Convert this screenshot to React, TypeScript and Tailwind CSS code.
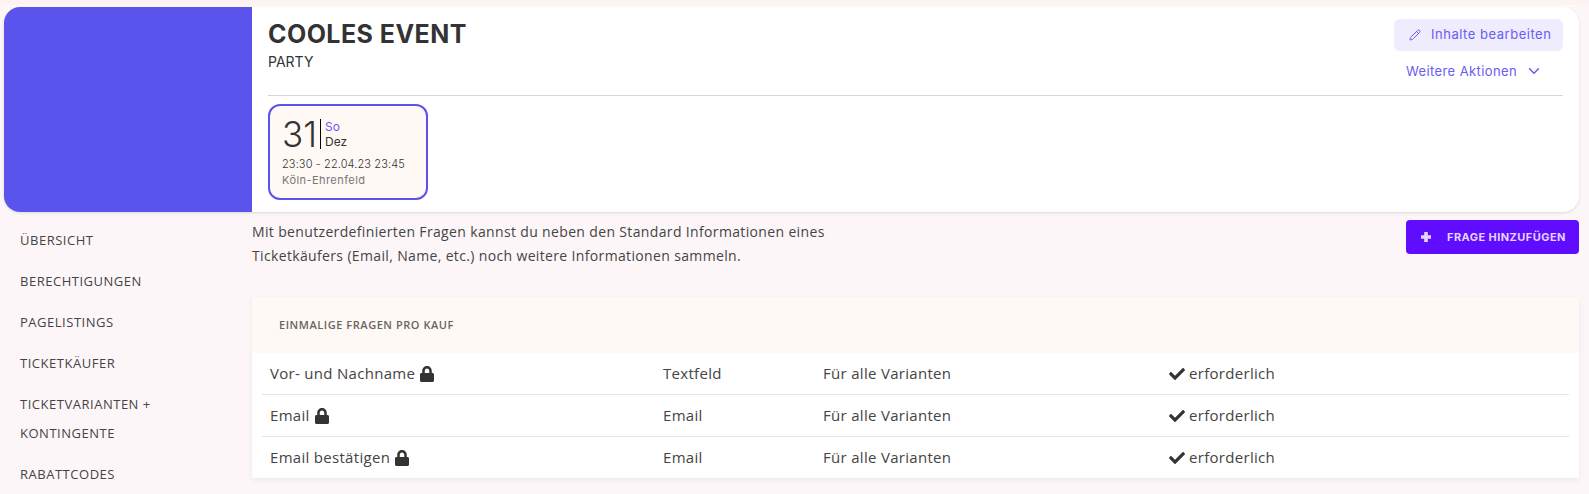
import { ChevronDown, Pencil } from "lucide-react";
import { FaCheck, FaLock } from "react-icons/fa";

const navItems = [
  "Übersicht",
  "Berechtigungen",
  "Pagelistings",
  "Ticketkäufer",
  "Ticketvarianten + Kontingente",
  "Rabattcodes",
];

const questions = [
  { name: "Vor- und Nachname", type: "Textfeld" },
  { name: "Email", type: "Email" },
  { name: "Email bestätigen", type: "Email" },
];

export default function App() {
  return (
    <div className="h-[494px] overflow-hidden border-t-[5px] border-[#fdf3f3] bg-[#fdf6f9] pl-1 pr-[10px] font-['Open_Sans',sans-serif] text-[#333333]">
      <div className="h-[2px] bg-[#fffafa]" />

      {/* Event header */}
      <header className="flex h-[205px] rounded-2xl bg-white shadow-[0_1px_3px_rgba(0,0,0,0.12)]">
        <div className="w-[248px] shrink-0 rounded-l-2xl bg-[#5a53ec]" />

        <div className="flex-1 px-4 pt-3">
          <div className="flex h-[77px] justify-between border-b border-[#d6d6d6]">
            <div>
              <h1 className="font-['Inter',sans-serif] text-[25px] leading-[31px] font-bold tracking-[0.45px]">
                COOLES EVENT
              </h1>
              <p className="mt-[3px] font-['Inter',sans-serif] text-sm leading-[18px]">PARTY</p>
            </div>

            <div className="flex flex-col items-end">
              <button className="flex h-8 w-[169px] items-center gap-[10px] rounded-md bg-[#eeecfd] pl-[15px] font-['Inter',sans-serif] text-[13px] tracking-[0.04em] text-[#6a5cf0]">
                <Pencil className="h-3 w-3" />
                Inhalte bearbeiten
              </button>
              <button className="mt-[11px] mr-[20px] flex items-center gap-[8px] font-['Inter',sans-serif] text-[13px] leading-4 tracking-[0.03em] text-[#6a5cf0]">
                Weitere Aktionen
                <ChevronDown className="h-[18px] w-[18px]" />
              </button>
            </div>
          </div>

          <div className="mt-[8px] h-[96px] w-[160px] rounded-xl border-2 border-[#5a53ec] bg-[#fff9f5] px-[12px] pt-[12px]">
            <div className="flex items-center">
              <span className="font-['Inter',sans-serif] text-[35px] leading-[32px] font-light">31</span>
              <div className="ml-[3px] border-l border-black pl-[4px] font-['Inter',sans-serif] text-xs leading-[15px]">
                <div className="text-[#6a5cf0]">So</div>
                <div>Dez</div>
              </div>
            </div>
            <p className="mt-[6px] font-['Inter',sans-serif] text-[11px] leading-4 font-light tracking-[0.01em]">
              23:30 - 22.04.23 23:45
            </p>
            <p className="font-['Inter',sans-serif] text-[11px] leading-4 tracking-[0.04em] text-[#777777]">
              Köln-Ehrenfeld
            </p>
          </div>
        </div>
      </header>

      <div className="flex">
        {/* Sidebar */}
        <nav className="w-[248px] shrink-0 pt-[8px] pl-4 pr-[70px]">
          <ul>
            {navItems.map((item) => (
              <li
                key={item}
                className="py-[6px] text-[13px] leading-[29px] tracking-[0.04em] text-[#444444] uppercase"
              >
                {item}
              </li>
            ))}
          </ul>
        </nav>

        <main className="flex-1">
          <div className="flex items-start justify-between pt-[8px]">
            <p className="w-[620px] text-sm leading-[24px] tracking-[0.025em] text-[#444444]">
              Mit benutzerdefinierten Fragen kannst du neben den Standard Informationen eines
              Ticketkäufers (Email, Name, etc.) noch weitere Informationen sammeln.
            </p>
            <button className="flex h-[34px] w-[173px] items-center rounded bg-[#5f0cff] pl-[14px] font-['Inter',sans-serif] text-[11px] font-bold tracking-[0.04em] text-[#e3d5ff]">
              <svg viewBox="0 0 12 12" className="mr-[15px] h-3 w-3" fill="none" stroke="currentColor" strokeWidth="3.6">
                <path d="M6 1v10M1 6h10" />
              </svg>
              FRAGE HINZUFÜGEN
            </button>
          </div>

          {/* Questions table */}
          <section className="mt-[29px] bg-white shadow-[0_2px_6px_rgba(0,0,0,0.06)]">
            <h2 className="flex h-[56px] items-center bg-[#fff9f5] pl-[27px] text-[11px] font-semibold tracking-[0.05em] text-[#666666] uppercase">
              Einmalige Fragen pro Kauf
            </h2>
            <div className="px-[10px]">
              {questions.map((q, i) => (
                <div
                  key={q.name}
                  className={`flex items-center pl-[8px] text-[15px] tracking-[0.02em] text-[#444444] ${i < 2 ? "h-[42px] border-b border-[#e3e3e3]" : "h-[41px]"}`}
                >
                  <div className="flex w-[393px] items-center gap-[4px]">
                    {q.name}
                    <FaLock className="h-4 w-4 text-[#333333]" />
                  </div>
                  <div className="w-[160px]">{q.type}</div>
                  <div className="w-[346px]">Für alle Varianten</div>
                  <div className="flex items-center gap-[4px]">
                    <FaCheck className="h-4 w-4 text-[#333333]" />
                    erforderlich
                  </div>
                </div>
              ))}
            </div>
          </section>
        </main>
      </div>
    </div>
  );
}
